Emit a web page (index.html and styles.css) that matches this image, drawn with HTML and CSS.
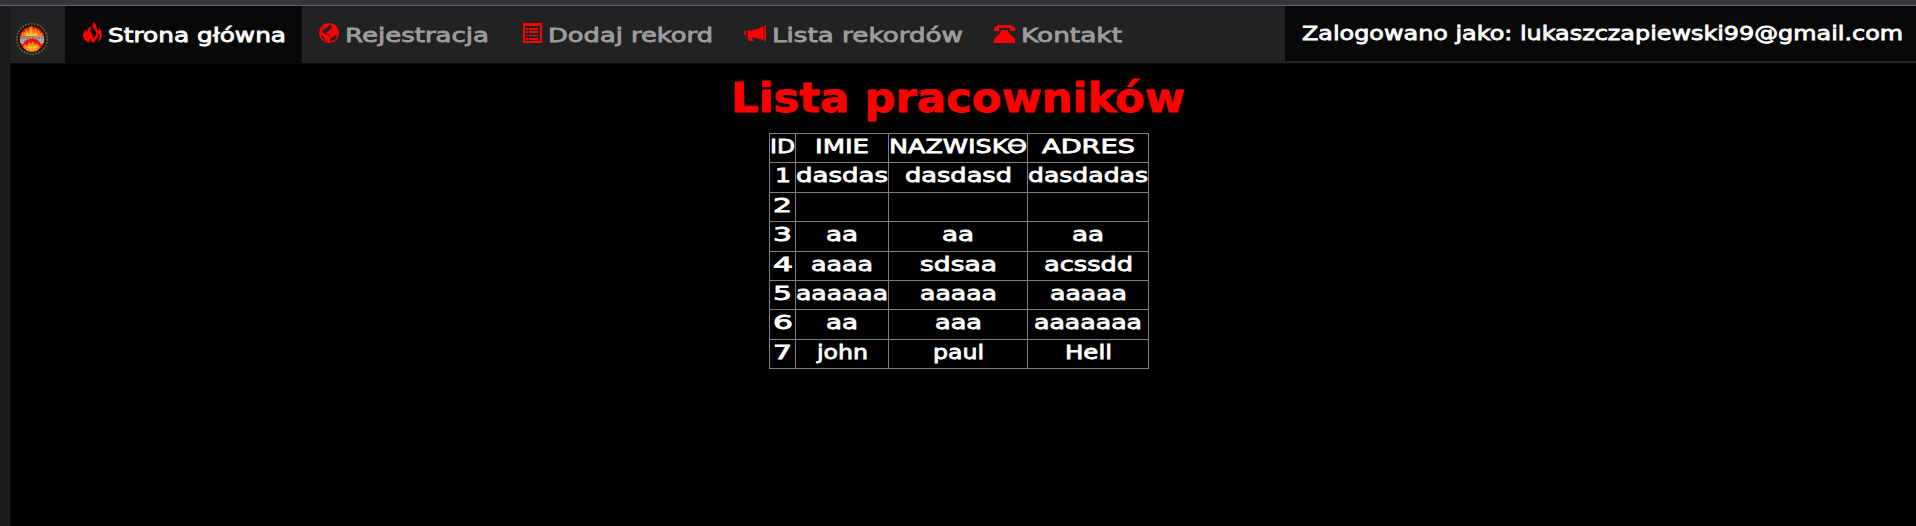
FILE: index.html
```html
<!DOCTYPE html>
<html lang="pl">
<head>
<meta charset="utf-8">
<title>Lista pracowników</title>
<link rel="stylesheet" href="styles.css">
</head>
<body>
<div class="topbar"></div>
<div class="page">
  <aside class="edge"></aside>
  <div class="content">
    <nav class="navbar">
      <a class="brand"><svg width="34" height="34" viewBox="0 0 34 34">
        <circle cx="17" cy="17" r="15" fill="#080808" stroke="#55553d" stroke-width="2.4" stroke-dasharray="2 1"/>
        <circle cx="17" cy="17" r="12.6" fill="#e91414"/>
        <path d="M6 14l1-4 2 1 2-4 2 2 2-4 2-1 1 4 3-2 1 3 2-1 1 3 2 0 1 4z" fill="#f47b16"/>
        <path d="M10 14l2-4 2 2 2-5 2 5 3-2 2 4z" fill="#f9bd28"/>
        <path d="M5 14.500h24v6l-3 2q-2-6-9-6t-9 6l-3-2z" fill="#aaa5a5"/>
        <path d="M5 16h24" stroke="#555" stroke-width="1" stroke-dasharray="2 1"/>
        <path d="M8 25l2-3 2 2 2-4 2 2 2-3 2 4 2-2 3 4-3 4-5 1-5-1z" fill="#f98a17"/>
        <path d="M12 26l2-2 3 1 3-2 2 3-5 2z" fill="#fbc22c"/>
      </svg></a>
      <a class="item active"><svg class="icon" width="20" height="22" viewBox="0 0 20 22"><path d="M10.500 0Q8 4 11.500 7.500q3 3.500 1 6.500-1.500 2-3.500 1.500 1.500-2 0-4-3-3.500-.5-7.500Q4 6 4 10q-1 0-1-2.500Q0 10 0 14q.5 5 7 7-2-3 1-5.500-1 3 1 4.500 1.500 1 2.500 0 0-2 2.500-3.500 2-3 .5-6 4 4 0 9.500 4.500-2.500 4.500-7.500 0-4-3-7 .5 2.500-1 3-2-1-1.500-3.500Q13.500 2 10.500 0z"/></svg><svg class="label" width="180" height="28"><text x="0" y="20" textLength="178">Strona główna</text></svg></a>
      <a class="item"><svg class="icon" width="20" height="22" viewBox="0 0 20 22"><path fill-rule="evenodd" d="M10 1a10 10 0 1 0 0 20 10 10 0 1 0 0-20zM11 2.500l2 1-1 2 1 1-2 1-2 2-2 1 1 2 3 0 1 1-3 0-2-1-3-2-1-3 1 0 1 1 1-2 3-1-1-1 2-.5zM2.500 12.500l2 2 1 3 3 2-3-1-3-3zM17.500 12.500l.5 2-2 3-4 2-1-1 1-3 3-1z"/></svg><svg class="label" width="146" height="28"><text x="1" y="20" textLength="144">Rejestracja</text></svg></a>
      <a class="item"><svg class="icon" width="20" height="22" viewBox="0 0 20 22"><path fill-rule="evenodd" d="M1 1h19v20H1zM3 4v15h15V4zM4 6h2v2H4zm3 0h9v2H7zM4 9h2v2H4zm3 0h9v2H7zM4 13h2v1H4zm3 0h9v1H7zM4 16h2v2H4zm3 0h9v2H7z"/></svg><svg class="label" width="167" height="28"><text x="1" y="20" textLength="165">Dodaj rekord</text></svg></a>
      <a class="item shifted"><svg class="icon" width="22" height="22" viewBox="0 0 22 22"><path d="M20.500 3h1.500v16h-1.500zM19.500 4v14l-10-2.500H7.500l2 3.500H5L3.500 14.500V8.500h4q7-1 12-4.500zM0 9h2v4H0z"/></svg><svg class="label" width="193" height="28"><text x="1" y="20" textLength="191">Lista rekordów</text></svg></a>
      <a class="item shifted"><svg class="icon" width="21" height="22" viewBox="0 0 21 22"><path d="M0 9V6l4-3h13l4 3v3h-5V6H5v3zM7 8h7v2l7 7v4H0v-4l7-7z"/></svg><svg class="label" width="103" height="28"><text x="1" y="20" textLength="101">Kontakt</text></svg></a>
      <div class="user"><svg width="604" height="28"><text x="1" y="20" textLength="601">Zalogowano jako: lukaszczapiewski99@gmail.com</text></svg></div>
    </nav>
    <main>
      <h1><svg width="456" height="48"><text x="0" y="33" textLength="454">Lista pracowników</text></svg></h1>
      <table>
        <tr><th><svg width="25" height="28"><text y="20" textLength="25">ID</text></svg></th><th><svg width="54" height="28"><text y="20" textLength="54">IMIE</text></svg></th><th><svg width="138" height="28"><text y="20" textLength="138">NAZWISKO</text><path class="bar" d="M121 12.500h14"/></svg></th><th><svg width="93" height="28"><text y="20" textLength="93">ADRES</text></svg></th></tr>
        <tr><td><svg width="16" height="28"><text y="20" textLength="16">1</text></svg></td><td><svg width="92" height="28"><text y="20" textLength="92">dasdas</text></svg></td><td><svg width="107" height="28"><text y="20" textLength="107">dasdasd</text></svg></td><td><svg width="120" height="28"><text y="20" textLength="120">dasdadas</text></svg></td></tr>
        <tr><td><svg width="19" height="28"><text y="20" textLength="19">2</text></svg></td><td></td><td></td><td></td></tr>
        <tr><td><svg width="19" height="28"><text y="20" textLength="19">3</text></svg></td><td><svg width="32" height="28"><text y="20" textLength="32">aa</text></svg></td><td><svg width="32" height="28"><text y="20" textLength="32">aa</text></svg></td><td><svg width="32" height="28"><text y="20" textLength="32">aa</text></svg></td></tr>
        <tr><td><svg width="20" height="28"><text y="20" textLength="20">4</text></svg></td><td><svg width="62" height="28"><text y="20" textLength="62">aaaa</text></svg></td><td><svg width="77" height="28"><text y="20" textLength="77">sdsaa</text></svg></td><td><svg width="89" height="28"><text y="20" textLength="89">acssdd</text></svg></td></tr>
        <tr><td><svg width="19" height="28"><text y="20" textLength="19">5</text></svg></td><td><svg width="92" height="28"><text y="20" textLength="92">aaaaaa</text></svg></td><td><svg width="77" height="28"><text y="20" textLength="77">aaaaa</text></svg></td><td><svg width="77" height="28"><text y="20" textLength="77">aaaaa</text></svg></td></tr>
        <tr><td><svg width="20" height="28"><text y="20" textLength="20">6</text></svg></td><td><svg width="32" height="28"><text y="20" textLength="32">aa</text></svg></td><td><svg width="47" height="28"><text y="20" textLength="47">aaa</text></svg></td><td><svg width="108" height="28"><text y="20" textLength="108">aaaaaaa</text></svg></td></tr>
        <tr><td><svg width="19" height="28"><text y="20" textLength="19">7</text></svg></td><td><svg width="51" height="28"><text y="20" textLength="51">john</text></svg></td><td><svg width="51" height="28"><text y="20" textLength="51">paul</text></svg></td><td><svg width="47" height="28"><text y="20" textLength="47">Hell</text></svg></td></tr>
      </table>
    </main>
  </div>
</div>
<script src="text.js"></script>
</body>
</html>
```
FILE: text.js
```js
// Widen the glyphs themselves rather than the gaps between them.
document.querySelectorAll('text').forEach(function (t) {
  t.setAttribute('lengthAdjust', 'spacingAndGlyphs');
});
```
FILE: styles.css
```css
* { box-sizing: border-box; }
body { margin: 0; height: 526px; background: #000; overflow: hidden; font-family: "DejaVu Sans", sans-serif; font-size: 20px; }
svg { display: block; flex: none; overflow: visible; }
text { fill: currentColor; stroke: currentColor; stroke-width: .8px; }
.topbar { height: 6px; background: #35363a; border-bottom: 1px solid #646665; }
.page { display: flex; height: 520px; }
.edge { width: 10px; background: #1b1b1b; }
.content { flex: 1; }
.navbar { display: flex; height: 58px; background: #222; border-bottom: 1px solid #080808; color: #9d9d9d; }
.brand { width: 55px; padding: 16px 0 0 5px; }
.item { display: flex; padding: 16px 15px 0 18px; }
.item .icon { fill: red; }
.item .label { margin-left: 5px; }
.active { width: 237px; height: 58px; background: #080808; color: #fff; }
.item + .item:not(.active) { padding-left: 17px; }
.item + .item.shifted { padding-left: 15px; }
.user { margin-left: auto; width: 631px; height: 55px; padding: 14px 0 0 16px; background: #080808; color: #fff; }
main { display: flex; flex-direction: column; align-items: center; padding: 15px 8px 0 0; }
h1 { margin: 0 0 6px; height: 48px; color: red; font-size: 40px; font-weight: bold; }
table { border-collapse: collapse; table-layout: fixed; width: 380px; color: #fff; }
tr { height: 29.4px; }
th, td { padding: 0; border: 1px solid #808080; font-weight: normal; vertical-align: top; }
td svg, th svg { margin: -1px auto 0; height: 28px; }
th:nth-child(1) { width: 26px; }
th:nth-child(2) { width: 93px; }
th:nth-child(3) { width: 139px; }
th:nth-child(4) { width: 121px; }
.bar { stroke: #fff; stroke-width: 2; }
```
